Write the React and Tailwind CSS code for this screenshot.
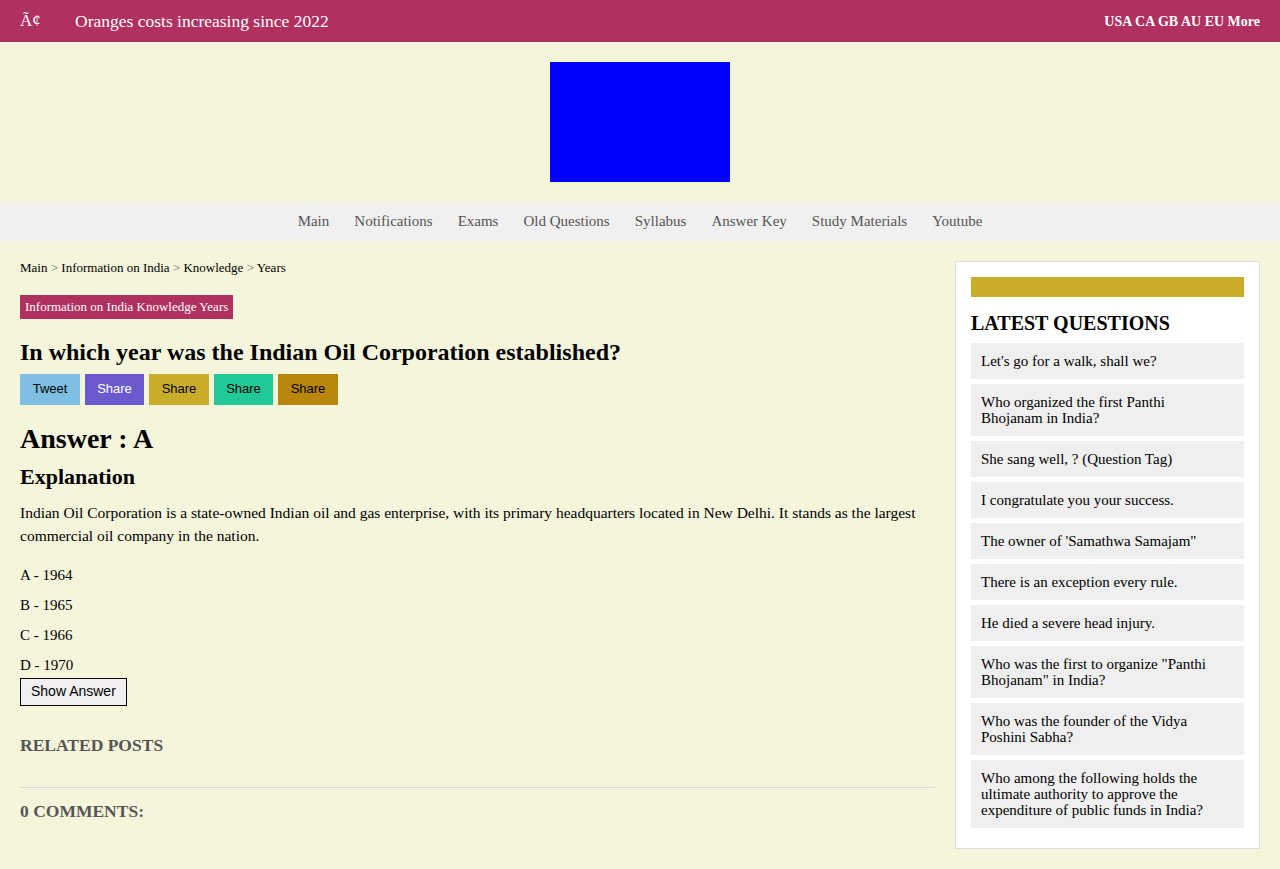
import React from 'react';

const NAV = ['Main', 'Notifications', 'Exams', 'Old Questions', 'Syllabus', 'Answer Key', 'Study Materials', 'Youtube'];

const SHARES = [
  { label: 'Tweet', cls: 'bg-[#7fbfe3] text-black w-[60px]' },
  { label: 'Share', cls: 'bg-[#6a5acd] text-white w-[59px]' },
  { label: 'Share', cls: 'bg-[#c8ac2a] text-black w-[60px]' },
  { label: 'Share', cls: 'bg-[#20c997] text-black w-[59px]' },
  { label: 'Share', cls: 'bg-[#b8860b] text-black w-[60px]' },
];

const OPTIONS = ['A - 1964', 'B - 1965', 'C - 1966', 'D - 1970'];

const LATEST = [
  "Let's go for a walk, shall we?",
  'Who organized the first Panthi Bhojanam in India?',
  'She sang well, ? (Question Tag)',
  'I congratulate you your success.',
  "The owner of 'Samathwa Samajam\"",
  'There is an exception every rule.',
  'He died a severe head injury.',
  'Who was the first to organize "Panthi Bhojanam" in India?',
  'Who was the founder of the Vidya Poshini Sabha?',
  'Who among the following holds the ultimate authority to approve the expenditure of public funds in India?',
];

const serif = "font-['Liberation_Serif',Georgia,serif]";
const arial = "font-['Liberation_Sans',Arial,sans-serif]";

const App = () => {
  return (
    <div className={`min-h-[869px] bg-[#f5f5dc] text-black ${serif}`}>
      {/* top bar */}
      <header className="h-[42px] bg-[#b0305f] text-white flex items-center justify-between px-5">
        <div className="flex items-center">
          <span className="text-[17px] w-[55px]">Ã¢</span>
          <span className="text-[17.5px]">Oranges costs increasing since 2022</span>
        </div>
        <div className="text-[14px] font-bold">USA CA GB AU EU More</div>
      </header>

      {/* banner */}
      <div className="h-[160px] flex items-center justify-center">
        <div className="w-[180px] h-[120px] bg-[#0000ff]" />
      </div>

      {/* nav */}
      <nav className="h-[39px] bg-[#f0f0f0] flex items-center justify-center gap-[25px] text-[15px] text-[#555]">
        {NAV.map((n) => (
          <span key={n}>{n}</span>
        ))}
      </nav>

      <div className="flex gap-5 px-5 pt-5 pb-5">
        {/* main column */}
        <main className="flex-1 min-w-0">
          <div className="text-[13px] mt-[-3px]">
            Main <span className="text-[#666]">&gt;</span> Information on India <span className="text-[#666]">&gt;</span> Knowledge <span className="text-[#666]">&gt;</span> Years
          </div>

          <div className="mt-[17px] inline-block bg-[#b0305f] text-white text-[13px] leading-[24px] px-[5px]">
            Information on India Knowledge Years
          </div>

          <h1 className="mt-[18px] text-[24px] font-bold leading-[30px]">
            In which year was the Indian Oil Corporation established?
          </h1>

          <div className={`flex gap-[5px] mt-[7px] ${arial}`}>
            {SHARES.map((s, i) => (
              <button key={i} className={`h-[31px] text-[13px] ${s.cls}`}>{s.label}</button>
            ))}
          </div>

          <h2 className="mt-[18px] text-[28px] font-bold leading-[32px]">Answer : A</h2>
          <h3 className="mt-[10px] text-[22px] font-bold leading-[24px]">Explanation</h3>

          <p className="mt-[12px] text-[15.5px] leading-[23px]">
            Indian Oil Corporation is a state-owned Indian oil and gas enterprise, with its primary headquarters located in New Delhi. It stands as the largest commercial oil company in the nation.
          </p>

          <div className="mt-[18px] flex flex-col gap-[9px]">
            {OPTIONS.map((o) => (
              <div key={o} className="text-[15px] leading-[21px]">{o}</div>
            ))}
          </div>

          <button className={`mt-[2px] h-[28px] px-[10px] border border-black bg-[#f0f0f0] text-[14px] ${arial}`}>
            Show Answer
          </button>

          <div className="mt-[28px] text-[17.5px] font-bold text-[#555] leading-[22px]">RELATED POSTS</div>

          <hr className="mt-[31px] border-0 border-t border-[#d8d8d8]" />

          <div className="mt-[12px] text-[17.5px] font-bold text-[#555] leading-[22px]">0 COMMENTS:</div>
        </main>

        {/* sidebar */}
        <aside className="w-[305px] shrink-0 bg-white border border-[#ddd] p-[15px] self-start">
          <div className="h-[20px] bg-[#c8ac2a]" />
          <h3 className="mt-[15px] text-[20px] font-bold leading-[22px]">LATEST QUESTIONS</h3>
          <div className="mt-[9px] flex flex-col gap-[5px]">
            {LATEST.map((q, i) => (
              <div key={i} className="bg-[#efefef] pl-[10px] pr-[18px] py-[10px] text-[15px] leading-[16px]">
                {q}
              </div>
            ))}
          </div>
          <div className="h-[5px]" />
        </aside>
      </div>
    </div>
  );
};

export default App;
